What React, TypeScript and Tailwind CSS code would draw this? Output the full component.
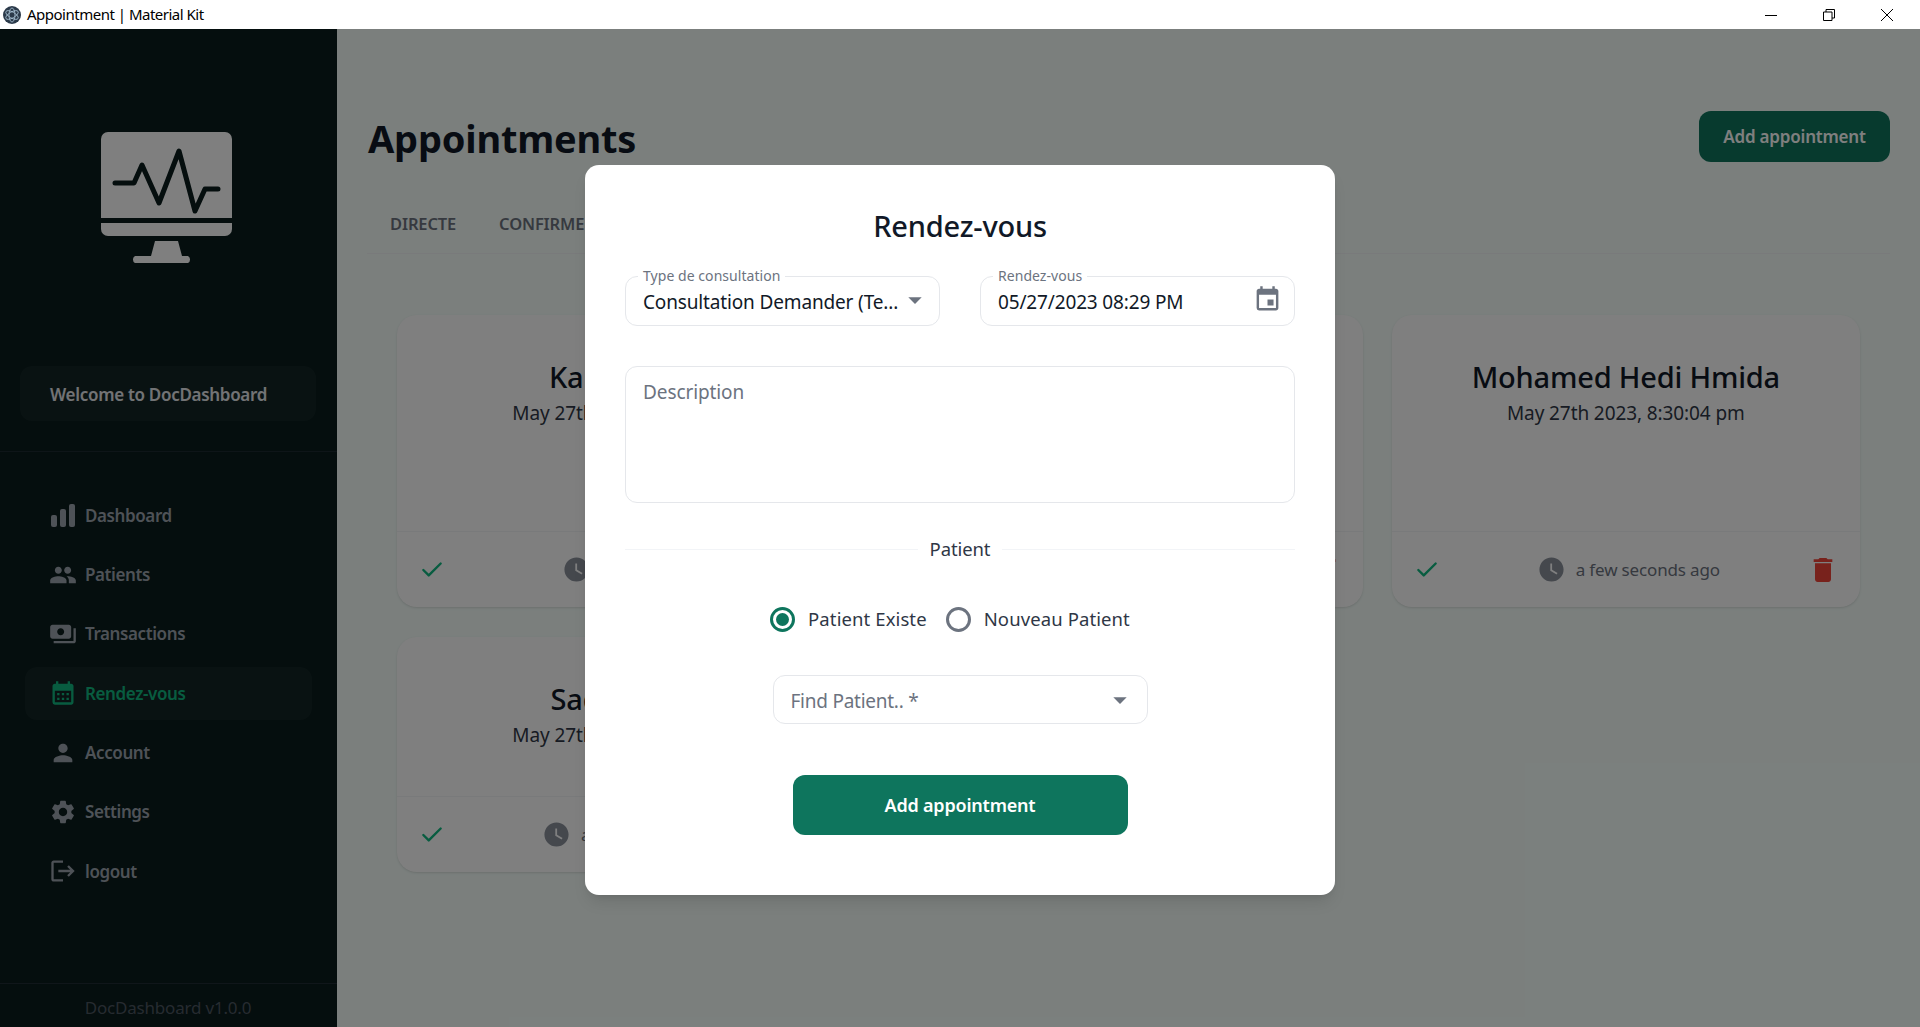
import React from 'react';
import { Check } from 'lucide-react';
import {
  MdArrowDropDown,
  MdCalendarMonth,
  MdDelete,
  MdEvent,
  MdLogout,
  MdPayments,
  MdPeople,
  MdPerson,
  MdSettings,
  MdWatchLater,
} from 'react-icons/md';

const BarsIcon = () => (
  <svg width="26" height="26" viewBox="0 0 26 26" fill="currentColor">
    <rect x="1" y="12" width="6" height="12" rx="2" />
    <rect x="10" y="6" width="6" height="18" rx="2" />
    <rect x="19" y="1" width="6" height="23" rx="2" />
  </svg>
);

const navItems = [
  { label: 'Dashboard', icon: <BarsIcon /> },
  { label: 'Patients', icon: <MdPeople size={28} /> },
  { label: 'Transactions', icon: <MdPayments size={28} /> },
  { label: 'Rendez-vous', icon: <MdCalendarMonth size={28} />, active: true },
  { label: 'Account', icon: <MdPerson size={28} /> },
  { label: 'Settings', icon: <MdSettings size={28} /> },
  { label: 'logout', icon: <MdLogout size={28} /> },
];

const Logo = () => (
  <svg width="131" height="131" viewBox="0 0 131 131" fill="#ffffff">
    <path d="M7 0H124a7 7 0 0 1 7 7V86H0V7a7 7 0 0 1 7-7Z" />
    <path d="M0 91H131V97a7 7 0 0 1-7 7H7a7 7 0 0 1-7-7Z" />
    <path d="M54 109H77L81 124H87a4 4 0 0 1 0 7H34a4 4 0 0 1 0-7H50Z" />
    <path
      d="M14 51H33L41 33L58 71L78 19L94 79L104 57H117"
      fill="none"
      stroke="#0a1c1c"
      strokeWidth="5"
      strokeLinecap="round"
      strokeLinejoin="round"
    />
  </svg>
);

const Sidebar = () => (
  <aside className="flex h-full w-[337px] shrink-0 flex-col bg-[#0a1c1c]">
    <div className="flex h-[337px] shrink-0 flex-col items-center justify-start pt-[103px] pr-[4px]">
      <Logo />
    </div>
    <div className="mr-[21px] ml-[20px] flex h-[55px] items-center rounded-xl bg-white/4 pt-[2px] pl-[30px] text-[17px] font-semibold tracking-[-0.3px] text-[#e5e7eb]">
      Welcome to DocDashboard
    </div>
    <div className="mt-[30px] border-t border-[#2f3746]/50" />
    <nav className="mx-[25px] mt-[37px] flex flex-col gap-[6.3px]">
      {navItems.map((item) => (
        <div
          key={item.label}
          className={`flex h-[53px] items-center rounded-xl pl-[24px] text-[17px] font-semibold tracking-[-0.4px] ${
            item.active ? 'bg-white/4 text-[#10b981]' : 'text-[#9da4ae]'
          }`}
        >
          <span className="flex w-[28px] items-center justify-center">{item.icon}</span>
          <span className="ml-[8px]">{item.label}</span>
        </div>
      ))}
    </nav>
    <div className="mt-auto flex h-[44px] items-center justify-center border-t border-[#2f3746]/60 pt-[4px] pr-[1px] text-[17px] tracking-[-0.2px] text-[#4d5761]">
      DocDashboard v1.0.0
    </div>
  </aside>
);

const AppointmentCard = ({
  name,
  ago,
  tall,
}: {
  name: string;
  ago: string;
  tall?: boolean;
}) => (
  <div className={`flex flex-col rounded-[20px] bg-white shadow-sm ${tall ? 'h-[292px]' : 'h-[235px]'}`}>
    <div className="flex-1 pt-[44px] text-center">
      <div className="text-[29px] leading-[36px] font-medium tracking-[-0.2px] text-[#111927]">{name}</div>
      <div className="mt-[5px] text-[19px] leading-[26px] tracking-[-0.1px] text-[#2f3746]">
        May 27th 2023, 8:30:04 pm
      </div>
    </div>
    <div className="flex h-[76px] items-center justify-between border-t border-[#f2f4f7] pr-[24px] pl-[22px]">
      <span className="w-[36px]">
        <Check size={26} strokeWidth={2.2} className="text-[#10b981]" />
      </span>
      <div className="flex items-center gap-[10px] text-[17px] tracking-[-0.15px] text-[#6c737f]">
        <MdWatchLater size={29} className="text-[#8a909b]" />
        {ago}
      </div>
      <MdDelete size={32} className="mr-[-3px] text-[#f04438]" />
    </div>
  </div>
);

const Main = () => (
  <main className="min-w-0 flex-1 bg-[#f6fffb] px-[30px] pt-[81px]">
    <div className="ml-[1px] flex items-start justify-between">
      <h1 className="text-[38px] leading-[56px] font-bold tracking-[-0.2px] text-[#111927]">Appointments</h1>
      <button className="mt-[1px] h-[51px] w-[191px] rounded-xl bg-[#0e755d] text-[17px] font-semibold tracking-[-0.2px] text-white">
        Add appointment
      </button>
    </div>
    <div className="mt-[31px] flex h-[57px] gap-[43px] border-b border-[#f2f4f7] pl-[23px] text-[16.5px] font-semibold tracking-[-0.15px] text-[#6c737f]">
      <span className="pt-[15px]">DIRECTE</span>
      <span className="pt-[15px]">CONFIRMEE</span>
    </div>
    <div className="mt-[61px] grid grid-cols-3 gap-x-[29px] gap-y-[30px] px-[30px]">
      <AppointmentCard tall name="Karim Ayadi" ago="a minute ago" />
      <AppointmentCard tall name="Sami Trabelsi" ago="a few seconds ago" />
      <AppointmentCard tall name="Mohamed Hedi Hmida" ago="a few seconds ago" />
      <AppointmentCard name="Sadok Ghali" ago="a few seconds ago" />
    </div>
  </main>
);

const Field = ({
  label,
  children,
  className,
}: {
  label: string;
  children: React.ReactNode;
  className?: string;
}) => (
  <div className={`relative flex h-[50px] items-center rounded-xl border border-[#e5e7eb] pl-[17px] ${className ?? ''}`}>
    <span className="absolute top-[-11px] left-[12px] bg-white px-[5px] text-[14px] leading-[19px] tracking-[0.05px] text-[#6c737f]">
      {label}
    </span>
    {children}
  </div>
);

const Radio = ({ label, checked }: { label: string; checked?: boolean }) => (
  <label className="flex items-center gap-[13px]">
    <span
      className={`flex h-[25px] w-[25px] items-center justify-center rounded-full border-[3px] ${
        checked ? 'border-[#0e755d]' : 'border-[#6c737f]'
      }`}
    >
      {checked && <span className="h-[13px] w-[13px] rounded-full bg-[#0e755d]" />}
    </span>
    <span>{label}</span>
  </label>
);

const Modal = () => (
  <div className="w-[750px] rounded-[14px] bg-white px-[40px] pt-[41px] pb-[60px] shadow-lg">
    <h2 className="text-center text-[29px] leading-[40px] font-medium tracking-[-0.2px] text-[#111927]">Rendez-vous</h2>
    <div className="mt-[30px] grid grid-cols-2 gap-[40px] text-[19px] tracking-[-0.15px] text-[#111927]">
      <Field label="Type de consultation">
        <span className="pt-[3px]">Consultation Demander (Te...</span>
        <MdArrowDropDown size={32} className="absolute top-[7px] right-[8px] text-[#6c737f]" />
      </Field>
      <Field label="Rendez-vous">
        <span className="pt-[3px]">05/27/2023 08:29 PM</span>
        <MdEvent size={29} className="absolute top-[8px] right-[12px] text-[#6c737f]" />
      </Field>
    </div>
    <div className="mt-[40px] h-[137px] rounded-xl border border-[#e5e7eb] pt-[11px] pl-[17px] text-[19px] tracking-[-0.1px] text-[#6c737f]">
      Description
    </div>
    <div className="mt-[34px] flex h-[24px] items-center gap-[12px] text-[18.5px] tracking-[-0.1px] text-[#2f3746]">
      <span className="h-px flex-1 bg-[#f2f4f7]" />
      Patient
      <span className="h-px flex-1 bg-[#f2f4f7]" />
    </div>
    <div className="mt-[46px] flex h-[24px] items-center justify-center gap-[19px] pr-[20px] text-[18.5px] tracking-[0.1px] text-[#2f3746]">
      <Radio checked label="Patient Existe" />
      <Radio label="Nouveau Patient" />
    </div>
    <div className="mx-auto mt-[44px] flex h-[49px] w-[375px] items-center justify-between rounded-xl border border-[#e5e7eb] pr-[11px] pl-[17px] text-[19px] tracking-[-0.25px] text-[#6c737f]">
      <span className="pt-[3px]">Find Patient.. *</span>
      <MdArrowDropDown size={32} />
    </div>
    <button className="mx-auto mt-[51px] block h-[60px] w-[335px] rounded-xl bg-[#0e755d] text-[18px] font-semibold tracking-[-0.2px] text-white">
      Add appointment
    </button>
  </div>
);

const TitleBar = () => (
  <header className="flex h-[29px] shrink-0 items-center bg-white pl-[3px] text-[15px] tracking-[-0.5px] text-black">
    <svg width="18" height="18" viewBox="0 0 18 18" fill="none">
      <circle cx="9" cy="9" r="9" fill="#2b3a4a" />
      <ellipse cx="9" cy="9" rx="7" ry="3" stroke="#a9c2d4" strokeWidth="0.8" transform="rotate(30 9 9)" />
      <ellipse cx="9" cy="9" rx="7" ry="3" stroke="#a9c2d4" strokeWidth="0.8" transform="rotate(90 9 9)" />
      <ellipse cx="9" cy="9" rx="7" ry="3" stroke="#a9c2d4" strokeWidth="0.8" transform="rotate(150 9 9)" />
    </svg>
    <span className="ml-[6px]">Appointment | Material Kit</span>
    <div className="ml-auto flex items-center gap-[46px] pr-[27px]">
      <svg width="12" height="12" viewBox="0 0 12 12" stroke="#000" strokeWidth="1">
        <path d="M0 6.5H12" />
      </svg>
      <svg width="12" height="12" viewBox="0 0 12 12" fill="none" stroke="#000" strokeWidth="1">
        <path d="M0.5 3H9V11.5H0.5Z" />
        <path d="M3 3V0.5H11.5V9H9" />
      </svg>
      <svg width="12" height="12" viewBox="0 0 12 12" stroke="#000" strokeWidth="1">
        <path d="M0 0L12 12M12 0L0 12" />
      </svg>
    </div>
  </header>
);

export default function App() {
  return (
    <div className="flex h-screen flex-col overflow-hidden bg-white font-['Noto_Sans',sans-serif]">
      <TitleBar />
      <div className="relative flex min-h-0 flex-1">
        <Sidebar />
        <Main />
        {/* backdrop du modal */}
        <div className="absolute inset-0 flex items-center justify-center bg-black/50 pt-[4px]">
          <Modal />
        </div>
      </div>
    </div>
  );
}
